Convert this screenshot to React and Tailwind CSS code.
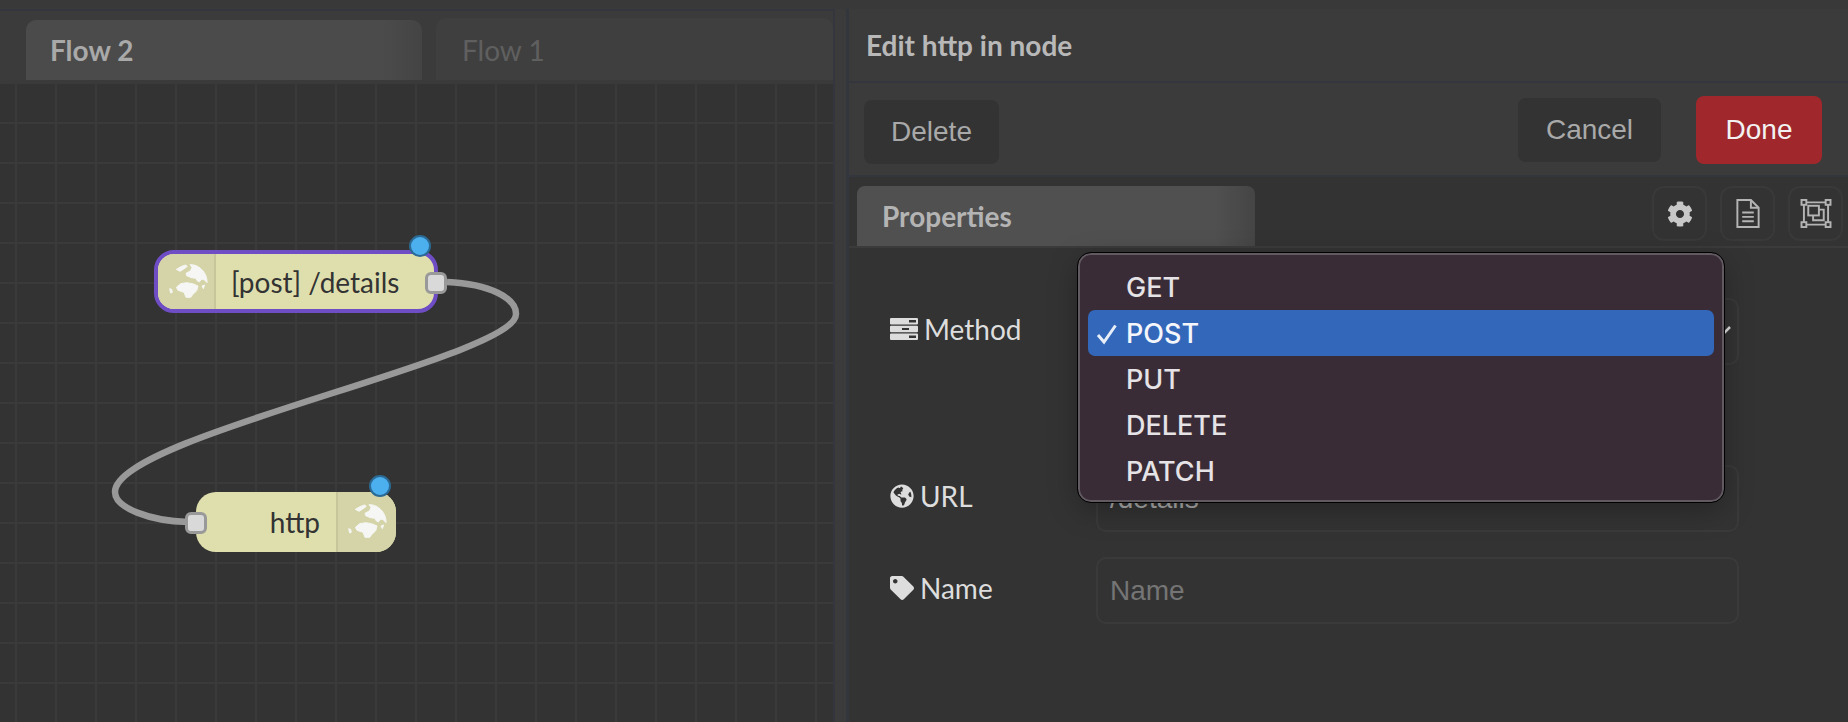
import React from "react";
import { FaCog, FaGlobeAmericas, FaTag } from "react-icons/fa";

const lato = "font-['Lato','Noto_Sans',sans-serif]";
const sys = "font-['Liberation_Sans',Arial,sans-serif]";

function Globe({ className }) {
  return (
    <svg viewBox="0 0 132 132" className={className} fill="#f6f6f4" stroke="#f6f6f4" strokeWidth="3" strokeLinejoin="round">
      <path d="M31 28 L45 20 L58 15 L64 19 L52 28 L42 34 Z" />
      <path d="M72 14 C90 13 106 24 115 38 C121 48 124 58 123 68 L116 60 L107 57 L100 66 L94 63 L90 55 L76 53 L62 47 L60 40 L74 32 L78 22 Z" />
      <path d="M31 82 L44 71 L62 68 L80 71 L96 78 L92 92 L80 104 L74 112 L60 112 L54 97 L36 91 Z" />
      <path d="M11 86 L17 88 L19 97 L14 99 Z" />
      <path d="M108 78 L116 75 L112 86 Z" />
    </svg>
  );
}

function Port({ className }) {
  return (
    <div className={`absolute w-[22px] h-[22px] rounded-[6px] bg-[#d9d9d9] border-[3px] border-[#999999] ${className}`} />
  );
}

function Badge({ className }) {
  return (
    <div className={`absolute w-[22px] h-[22px] rounded-full bg-[#4cb0ee] border-2 border-[#2b6a94] ${className}`} />
  );
}

function MethodIcon() {
  return (
    <svg viewBox="0 0 28 22" className="w-[28px] h-[22px]" fill="#dddddd">
      <path fillRule="evenodd" d="M1 0h26a1 1 0 0 1 1 1v4.5a1 1 0 0 1-1 1H1a1 1 0 0 1-1-1V1a1 1 0 0 1 1-1zM19 2v2.500h7V2zM1 7.800h26a1 1 0 0 1 1 1v4.400a1 1 0 0 1-1 1H1a1 1 0 0 1-1-1V8.800a1 1 0 0 1 1-1zM12 10v2h7v-2zM1 15.500h26a1 1 0 0 1 1 1V21a1 1 0 0 1-1 1H1a1 1 0 0 1-1-1v-4.500a1 1 0 0 1 1-1zM19 17.500V20h7v-2.500z" />
    </svg>
  );
}

function FileIcon() {
  return (
    <svg viewBox="0 0 24 30" className="w-[24px] h-[29px]" fill="none" stroke="#b4b4b4" strokeWidth="2">
      <path d="M1 1h14l8 8v20H1z" />
      <path d="M15 1v8h8" />
      <path d="M6 14h12M6 18.500h12M6 23h12" />
    </svg>
  );
}

function LayoutIcon() {
  return (
    <svg viewBox="0 0 32 30" className="w-[32px] h-[29px]" fill="none" stroke="#b4b4b4" strokeWidth="2">
      <rect x="1" y="1" width="5" height="5" />
      <rect x="26" y="1" width="5" height="5" />
      <rect x="1" y="24" width="5" height="5" />
      <rect x="26" y="24" width="5" height="5" />
      <path d="M6 3.500h20M6 26.500h20M3.500 6v18M28.500 6v18" />
      <rect x="8" y="7" width="11" height="10" />
      <path d="M19 11h5v11H13v-5" />
    </svg>
  );
}

function IconBox({ children }) {
  return (
    <div className="w-[55px] h-[55px] rounded-[12px] border-2 border-[#393939] flex items-center justify-center">
      {children}
    </div>
  );
}

function FormRow({ icon, label, gap, children, rowClass }) {
  return (
    <div className={`flex items-center ${rowClass}`}>
      <div className={`w-[247px] pl-[41px] pb-[5px] flex items-center ${gap} ${lato} text-[28px] text-[#dddddd]`}>
        {icon}
        <span>{label}</span>
      </div>
      {children}
    </div>
  );
}

const items = ["GET", "POST", "PUT", "DELETE", "PATCH"];

export default function App() {
  return (
    <div className="w-[1848px] h-[722px] overflow-hidden flex flex-col bg-[#3b3b3b]">
      <div className="h-[9px] shrink-0 bg-[#393939]" />
      <div className="flex-1 flex min-h-0">
        {/* left workspace */}
        <div className="w-[835px] shrink-0 flex flex-col border-r-2 border-t-2 border-[#33373d]">
          <div className="h-[71px] shrink-0 flex items-end pl-[26px] gap-[14px] bg-[#3b3b3b] border-b-2 border-[#3a3a3a]">
            <div className={`w-[396px] h-[60px] rounded-t-[10px] bg-gradient-to-r from-[#4b4b4b] from-90% to-[#444444] flex items-center pl-[24px] ${lato} font-bold text-[28px] text-[#a9a9a9]`}>
              Flow 2
            </div>
            <div className={`flex-1 h-[62px] rounded-t-[10px] bg-[#3f3f3f] flex items-center pl-[26px] pt-[1px] ${lato} text-[28px] text-[#5f5f5f]`}>
              Flow 1
            </div>
          </div>
          <div className="relative flex-1 bg-[#333333] bg-[linear-gradient(to_right,#3a3a3a_2px,transparent_2px),linear-gradient(to_bottom,#3a3a3a_2px,transparent_2px)] bg-[length:40px_40px] bg-[position:15px_0px] overflow-hidden">
            <svg className="absolute left-0 -top-[82px]" width="833" height="722" fill="none">
              <path d="M447 282 C 490 284 516 298 516 314 C 516 358 115 436 115 492 C 115 508 150 521 188 522" stroke="#999999" strokeWidth="6.500" />
            </svg>
            {/* node 1 */}
            <div className="absolute left-[154px] top-[168px] w-[284px] h-[63px] rounded-[20px] border-4 border-[#6f4dc4] bg-[#dfdfae] overflow-hidden flex items-stretch">
              <div className="w-[58px] shrink-0 bg-[#d4d4a8] border-r-2 border-[#c6c69a] flex items-center pl-[8px]">
                <Globe className="w-[44px] h-[44px]" />
              </div>
              <div className={`flex-1 pl-[15px] pt-[1px] flex items-center ${lato} text-[28px] text-[#333333] whitespace-nowrap`}>
                [post] /details
              </div>
            </div>
            <Port className="left-[425px] top-[190px]" />
            <Badge className="left-[409px] top-[153px]" />
            {/* node 2 */}
            <div className="absolute left-[196px] top-[410px] w-[200px] h-[60px] rounded-[20px] bg-[#dfdfae] overflow-hidden flex items-stretch">
              <div className={`w-[140px] shrink-0 pr-[16px] flex items-center justify-end ${lato} text-[28px] text-[#333333]`}>
                http
              </div>
              <div className="flex-1 bg-[#d4d4a8] border-l-2 border-[#c6c69a] flex items-center pl-[7px]">
                <Globe className="w-[44px] h-[44px]" />
              </div>
            </div>
            <Port className="left-[185px] top-[430px]" />
            <Badge className="left-[369px] top-[393px]" />
          </div>
        </div>

        {/* splitter */}
        <div className="w-[11px] shrink-0 bg-[#3b3b3b]" />

        {/* editor */}
        <div className="relative flex-1 min-w-0 flex flex-col border-l-[3px] border-[#33373d]">
          <div className={`h-[74px] shrink-0 flex items-center pl-[17px] border-b-2 border-[#33373d] ${lato} font-bold text-[28px] text-[#b8b8b8]`}>
            Edit http in node
          </div>
          <div className="h-[94px] shrink-0 flex items-center pt-[2px] pl-[15px] pr-[26px] border-b-2 border-[#33373d]">
            <div className={`w-[135px] h-[64px] mt-[4px] rounded-[8px] bg-[#333333] flex items-center justify-center ${sys} text-[28px] text-[#a9a9a9]`}>
              Delete
            </div>
            <div className={`ml-auto w-[143px] h-[64px] rounded-[8px] bg-[#333333] flex items-center justify-center ${sys} text-[28px] text-[#a9a9a9]`}>
              Cancel
            </div>
            <div className={`ml-[35px] w-[126px] h-[68px] rounded-[8px] bg-[#a0282c] flex items-center justify-center ${sys} text-[28px] text-[#f2f2f2]`}>
              Done
            </div>
          </div>
          <div className="flex-1 flex flex-col bg-[#333333]">
            <div className="h-[71px] shrink-0 flex items-end pl-[8px] pr-[5px] border-b-2 border-[#3b3b3b]">
              <div className={`w-[398px] h-[60px] rounded-t-[8px] bg-gradient-to-r from-[#505050] from-90% to-[#454545] flex items-center pl-[25px] ${lato} font-bold text-[28px] text-[#b4b4b4]`}>
                Properties
              </div>
              <div className="ml-auto mb-[5px] flex gap-[13px]">
                <IconBox><FaCog className="w-[26px] h-[26px] text-[#c8c8c8]" /></IconBox>
                <IconBox><FileIcon /></IconBox>
                <IconBox><LayoutIcon /></IconBox>
              </div>
            </div>
            <div className="relative flex-1 flex flex-col pt-[50px]">
              <FormRow icon={<MethodIcon />} label="Method" gap="gap-[6px]" rowClass="h-[67px]">
                <div className="w-[643px] h-[67px] rounded-[10px] border-2 border-[#3a3a3a]" />
              </FormRow>
              <FormRow icon={<FaGlobeAmericas className="w-[24px] h-[24px]" />} label="URL" gap="gap-[6px]" rowClass="h-[67px] mt-[100px]">
                <div className={`w-[643px] h-[67px] rounded-[10px] border-2 border-[#3a3a3a] flex items-center pl-[12px] ${sys} text-[28px] text-[#a9a9a9]`}>
                  /details
                </div>
              </FormRow>
              <FormRow icon={<FaTag className="w-[24px] h-[24px]" />} label="Name" gap="gap-[6px]" rowClass="h-[67px] mt-[25px]">
                <div className={`w-[643px] h-[67px] rounded-[10px] border-2 border-[#3a3a3a] flex items-center pl-[12px] ${sys} text-[28px] text-[#757575]`}>
                  Name
                </div>
              </FormRow>
            </div>
          </div>

          {/* chevron peeking past the menu */}
          <svg className="absolute left-[875px] top-[317px]" width="8" height="10" viewBox="0 0 8 10">
            <path d="M0 7 L6 1" stroke="#dddddd" strokeWidth="2.500" />
          </svg>

          {/* method dropdown */}
          <div className="absolute left-[229px] top-[244px] w-[646px] h-[249px] rounded-[13px] bg-[#392c36] border-2 border-[#625a61] outline-1 outline-black shadow-[0_8px_30px_rgba(0,0,0,0.28)] px-[8px] pt-[9px]">
            {items.map((m) => {
              const on = m === "POST";
              return (
                <div
                  key={m}
                  className={`relative h-[46px] rounded-[7px] pl-[38px] pt-[2px] flex items-center font-['Inter',sans-serif] font-medium text-[27px] ${on ? "bg-[#3367ba] text-[#f4f6fb]" : "text-[#e6e3e6]"}`}
                >
                  {on && (
                    <svg className="absolute left-[8px] top-[13px]" width="22" height="22" viewBox="0 0 22 22" fill="none">
                      <path d="M2 12 L8 19 L19.500 2.500" stroke="#e8eef8" strokeWidth="3" />
                    </svg>
                  )}
                  {m}
                </div>
              );
            })}
          </div>
        </div>
      </div>
    </div>
  );
}
